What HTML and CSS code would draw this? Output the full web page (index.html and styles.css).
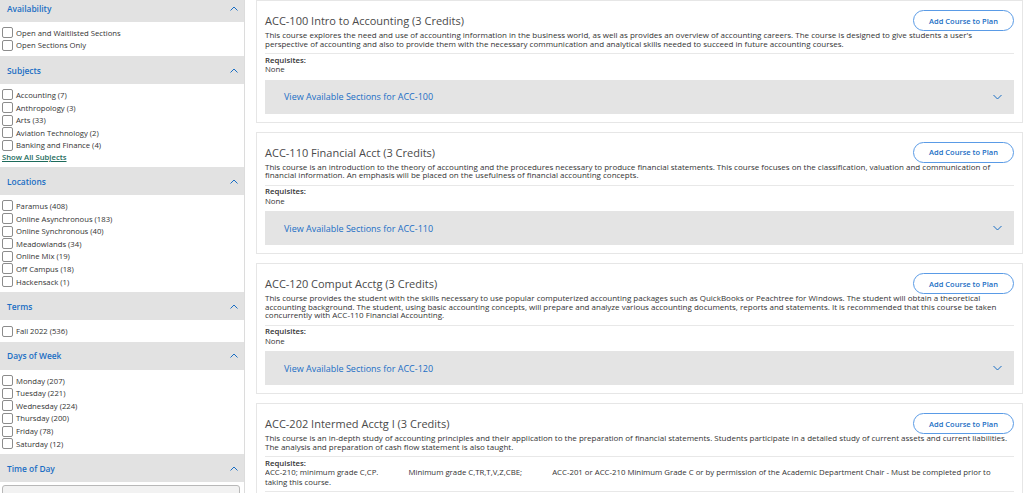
FILE: index.html
```html
<!DOCTYPE html>
<html lang="en">
<head>
<meta charset="utf-8">
<title>Course Catalog</title>
<link rel="stylesheet" href="styles.css">
</head>
<body>
<div class="page">
  <aside class="sidebar">
    <section class="facet">
      <div class="facet-head"><span>Availability</span><svg class="chev" width="8" height="5" viewBox="0 0 8 5"><path d="M0.5 4.5 L4 1 L7.5 4.5" fill="none" stroke="#1a6ec4" stroke-width="1"/></svg></div>
      <ul class="facet-list">
        <li><span class="cb"></span>Open and Waitlisted Sections</li>
        <li><span class="cb"></span>Open Sections Only</li>
      </ul>
    </section>
    <section class="facet">
      <div class="facet-head"><span>Subjects</span><svg class="chev" width="8" height="5" viewBox="0 0 8 5"><path d="M0.5 4.5 L4 1 L7.5 4.5" fill="none" stroke="#1a6ec4" stroke-width="1"/></svg></div>
      <ul class="facet-list">
        <li><span class="cb"></span>Accounting (7)</li>
        <li><span class="cb"></span>Anthropology (3)</li>
        <li><span class="cb"></span>Arts (33)</li>
        <li><span class="cb"></span>Aviation Technology (2)</li>
        <li><span class="cb"></span>Banking and Finance (4)</li>
        <li class="show-all"><a href="#">Show All Subjects</a></li>
      </ul>
    </section>
    <section class="facet">
      <div class="facet-head"><span>Locations</span><svg class="chev" width="8" height="5" viewBox="0 0 8 5"><path d="M0.5 4.5 L4 1 L7.5 4.5" fill="none" stroke="#1a6ec4" stroke-width="1"/></svg></div>
      <ul class="facet-list">
        <li><span class="cb"></span>Paramus (408)</li>
        <li><span class="cb"></span>Online Asynchronous (183)</li>
        <li><span class="cb"></span>Online Synchronous (40)</li>
        <li><span class="cb"></span>Meadowlands (34)</li>
        <li><span class="cb"></span>Online Mix (19)</li>
        <li><span class="cb"></span>Off Campus (18)</li>
        <li><span class="cb"></span>Hackensack (1)</li>
      </ul>
    </section>
    <section class="facet">
      <div class="facet-head"><span>Terms</span><svg class="chev" width="8" height="5" viewBox="0 0 8 5"><path d="M0.5 4.5 L4 1 L7.5 4.5" fill="none" stroke="#1a6ec4" stroke-width="1"/></svg></div>
      <ul class="facet-list">
        <li><span class="cb"></span>Fall 2022 (536)</li>
      </ul>
    </section>
    <section class="facet">
      <div class="facet-head"><span>Days of Week</span><svg class="chev" width="8" height="5" viewBox="0 0 8 5"><path d="M0.5 4.5 L4 1 L7.5 4.5" fill="none" stroke="#1a6ec4" stroke-width="1"/></svg></div>
      <ul class="facet-list">
        <li><span class="cb"></span>Monday (207)</li>
        <li><span class="cb"></span>Tuesday (221)</li>
        <li><span class="cb"></span>Wednesday (224)</li>
        <li><span class="cb"></span>Thursday (200)</li>
        <li><span class="cb"></span>Friday (78)</li>
        <li><span class="cb"></span>Saturday (12)</li>
      </ul>
    </section>
    <section class="facet">
      <div class="facet-head"><span>Time of Day</span><svg class="chev" width="8" height="5" viewBox="0 0 8 5"><path d="M0.5 4.5 L4 1 L7.5 4.5" fill="none" stroke="#1a6ec4" stroke-width="1"/></svg></div>
      <div class="time-box"></div>
    </section>
  </aside>

  <main class="results">
    <article class="course">
      <div class="course-head">
        <h2 class="course-title">ACC-100 Intro to Accounting (3 Credits)</h2>
        <button class="add-btn" type="button">Add Course to Plan</button>
      </div>
      <p class="desc">This course explores the need and use of accounting information in the business world, as well as provides an overview of accounting careers. The course is designed to give students a user's perspective of accounting and also to provide them with the necessary communication and analytical skills needed to succeed in future accounting courses.</p>
      <div class="reqs"><div class="reqs-label">Requisites:</div><div>None</div></div>
      <div class="sections-bar"><a href="#">View Available Sections for ACC-100</a><svg width="9" height="6" viewBox="0 0 9 6"><path d="M0.5 1 L4.5 5 L8.5 1" fill="none" stroke="#1a6ec4" stroke-width="1"/></svg></div>
    </article>

    <article class="course">
      <div class="course-head">
        <h2 class="course-title">ACC-110 Financial Acct (3 Credits)</h2>
        <button class="add-btn" type="button">Add Course to Plan</button>
      </div>
      <p class="desc">This course is an introduction to the theory of accounting and the procedures necessary to produce financial statements. This course focuses on the classification, valuation and communication of financial information. An emphasis will be placed on the usefulness of financial accounting concepts.</p>
      <div class="reqs"><div class="reqs-label">Requisites:</div><div>None</div></div>
      <div class="sections-bar"><a href="#">View Available Sections for ACC-110</a><svg width="9" height="6" viewBox="0 0 9 6"><path d="M0.5 1 L4.5 5 L8.5 1" fill="none" stroke="#1a6ec4" stroke-width="1"/></svg></div>
    </article>

    <article class="course">
      <div class="course-head">
        <h2 class="course-title">ACC-120 Comput Acctg (3 Credits)</h2>
        <button class="add-btn" type="button">Add Course to Plan</button>
      </div>
      <p class="desc">This course provides the student with the skills necessary to use popular computerized accounting packages such as QuickBooks or Peachtree for Windows. The student will obtain a theoretical accounting background. The student, using basic accounting concepts, will prepare and analyze various accounting documents, reports and statements. It is recommended that this course be taken concurrently with ACC-110 Financial Accounting.</p>
      <div class="reqs"><div class="reqs-label">Requisites:</div><div>None</div></div>
      <div class="sections-bar"><a href="#">View Available Sections for ACC-120</a><svg width="9" height="6" viewBox="0 0 9 6"><path d="M0.5 1 L4.5 5 L8.5 1" fill="none" stroke="#1a6ec4" stroke-width="1"/></svg></div>
    </article>

    <article class="course">
      <div class="course-head">
        <h2 class="course-title">ACC-202 Intermed Acctg I (3 Credits)</h2>
        <button class="add-btn" type="button">Add Course to Plan</button>
      </div>
      <p class="desc">This course is an in-depth study of accounting principles and their application to the preparation of financial statements. Students participate in a detailed study of current assets and current liabilities. The analysis and preparation of cash flow statement is also taught.</p>
      <div class="reqs reqs-long">
        <div class="reqs-label">Requisites:</div>
        <div class="reqs-line"><span class="req-part">ACC-210; minimum grade C,CP.</span><span class="req-part">Minimum grade C,TR,T,V,Z,CBE;</span><span>ACC-201 or ACC-210 Minimum Grade C or by permission of the Academic Department Chair - Must be completed prior to</span></div>
        <div>taking this course.</div>
      </div>
    </article>
  </main>
</div>
</body>
</html>
```

FILE: styles.css
```css
html, body {
  margin: 0;
  padding: 0;
  height: 493px;
  overflow: hidden;
  background: #fff;
}
body {
  font-family: "Open Sans", "Liberation Sans", sans-serif;
  color: #333;
}
.page {
  display: flex;
  align-items: flex-start;
}

/* Sidebar */
.sidebar {
  flex: none;
  width: 244px;
  border-right: 1px solid #dcdcdc;
  margin-top: -6px;
  min-height: 520px;
}
.facet-head {
  height: 28px;
  background: #e2e2e2;
  display: flex;
  align-items: center;
  justify-content: space-between;
  padding: 0 6px 0 7px;
  color: #1a6ec4;
  font-size: 8.4px;
  font-weight: 600;
}
.facet-list {
  list-style: none;
  margin: 0;
  padding: 4.5px 0;
}
.facet-list li {
  height: 12.6px;
  display: flex;
  align-items: center;
  font-size: 7.7px;
  color: #333;
  white-space: nowrap;
}
.cb {
  flex: none;
  width: 11px;
  height: 11px;
  box-sizing: border-box;
  border: 1px solid #8c8c8c;
  border-radius: 2px;
  background: #fff;
  margin: 0 3px 0 2px;
}
.facet-list li.show-all {
  height: 11px;
  padding-left: 2px;
}
.show-all a {
  color: #1d6b5b;
  font-weight: 600;
  text-decoration: underline;
}
.time-box {
  margin: 3px 4px 0 2px;
  height: 20px;
  border: 1px solid #b8b8b8;
  border-radius: 3px;
  background: #f2f2f2;
}

/* Results */
.results {
  flex: 1;
  min-width: 0;
  padding: 0 0 0 11px;
}
.course {
  border: 1px solid #e6e6e6;
  padding: 9px 8px 8px;
  margin-bottom: 9px;
}
.course-head {
  display: flex;
  align-items: center;
  justify-content: space-between;
  height: 21px;
}
.course-title {
  margin: 0;
  font-size: 11px;
  font-weight: 400;
  color: #4a4a4a;
}
.add-btn {
  flex: none;
  width: 101px;
  height: 21px;
  border: 1px solid #5a9be6;
  border-radius: 11px;
  background: #fff;
  color: #1a6ec4;
  font-family: "Open Sans", "Liberation Sans", sans-serif;
  font-size: 7.5px;
  font-weight: 600;
  padding: 0;
}
.desc {
  margin: 0;
  font-size: 8px;
  line-height: 8.5px;
  padding-bottom: 5px;
  border-bottom: 1px solid #e8e8e8;
}
.reqs {
  font-size: 7.8px;
  line-height: 9.5px;
  padding-top: 1.5px;
}
.reqs-label {
  font-weight: 600;
}
.reqs-line {
  white-space: nowrap;
  overflow: hidden;
}
.req-part {
  margin-right: 30px;
}
.reqs-long {
  padding-bottom: 4px;
  border-bottom: 1px solid #e8e8e8;
}
.sections-bar {
  margin-top: 5px;
  height: 34px;
  background: #e4e4e4;
  display: flex;
  align-items: center;
  justify-content: space-between;
  padding: 0 12px 0 19px;
}
.sections-bar a {
  color: #1a6ec4;
  font-size: 9px;
  text-decoration: none;
}
```
